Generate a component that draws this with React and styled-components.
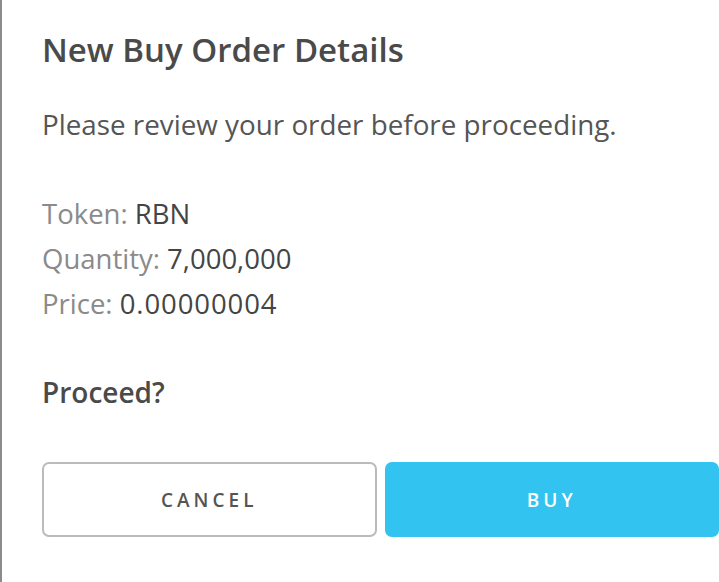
import React from "react";
import styled, { createGlobalStyle } from "styled-components";

const Global = createGlobalStyle`
  html, body { margin: 0; padding: 0; background: #fff; }
  body { font-family: "Open Sans", Lato, sans-serif; }
  * { box-sizing: border-box; }
`;

const Modal = styled.div`
  min-height: 582px;
  border-left: 2px solid #8c8c8c;
  padding: 30px 0 0 40px;
  background: #fff;
`;

const Title = styled.h2`
  margin: 0;
  font-size: 33px;
  line-height: 40px;
  font-weight: 600;
  color: #4a4a4a;
`;

const Lead = styled.p`
  margin: 34px 0 0;
  font-size: 27.8px;
  line-height: 40px;
  font-weight: 400;
  color: #555;
`;

const Info = styled.div`
  margin-top: 47px;
  display: flex;
  flex-direction: column;
`;

const Row = styled.div`
  font-size: 27.5px;
  line-height: 45px;
  color: #444;
`;

const Label = styled.span`
  color: #8a8a8a;
`;

const Value = styled.span`
  letter-spacing: ${(p) => (p.$spread ? "0.9px" : "0")};
`;

const Question = styled.p`
  margin: 46px 0 0;
  font-size: 28px;
  line-height: 40px;
  font-weight: 600;
  color: #4a4a4a;
`;

const Actions = styled.div`
  margin-top: 50px;
  display: flex;
  gap: 8px;
`;

const Button = styled.button`
  flex: 1;
  height: 75px;
  border-radius: 7px;
  border: 2px solid ${(p) => (p.$primary ? "#33c3f0" : "#bbb")};
  background: ${(p) => (p.$primary ? "#33c3f0" : "#fff")};
  color: ${(p) => (p.$primary ? "#fff" : "#555")};
  font-family: "Open Sans", Lato, sans-serif;
  font-size: 19px;
  font-weight: 600;
  letter-spacing: 4px;
  text-transform: uppercase;
  cursor: pointer;
`;

export default function App() {
  return (
    <>
      <Global />
      <Modal>
        <Title>New Buy Order Details</Title>
        <Lead>Please review your order before proceeding.</Lead>
        <Info>
          <Row><Label>Token: </Label><Value>RBN</Value></Row>
          <Row><Label>Quantity: </Label><Value>7,000,000</Value></Row>
          <Row><Label>Price: </Label><Value $spread>0.00000004</Value></Row>
        </Info>
        <Question>Proceed?</Question>
        <Actions>
          <Button>Cancel</Button>
          <Button $primary>Buy</Button>
        </Actions>
      </Modal>
    </>
  );
}
